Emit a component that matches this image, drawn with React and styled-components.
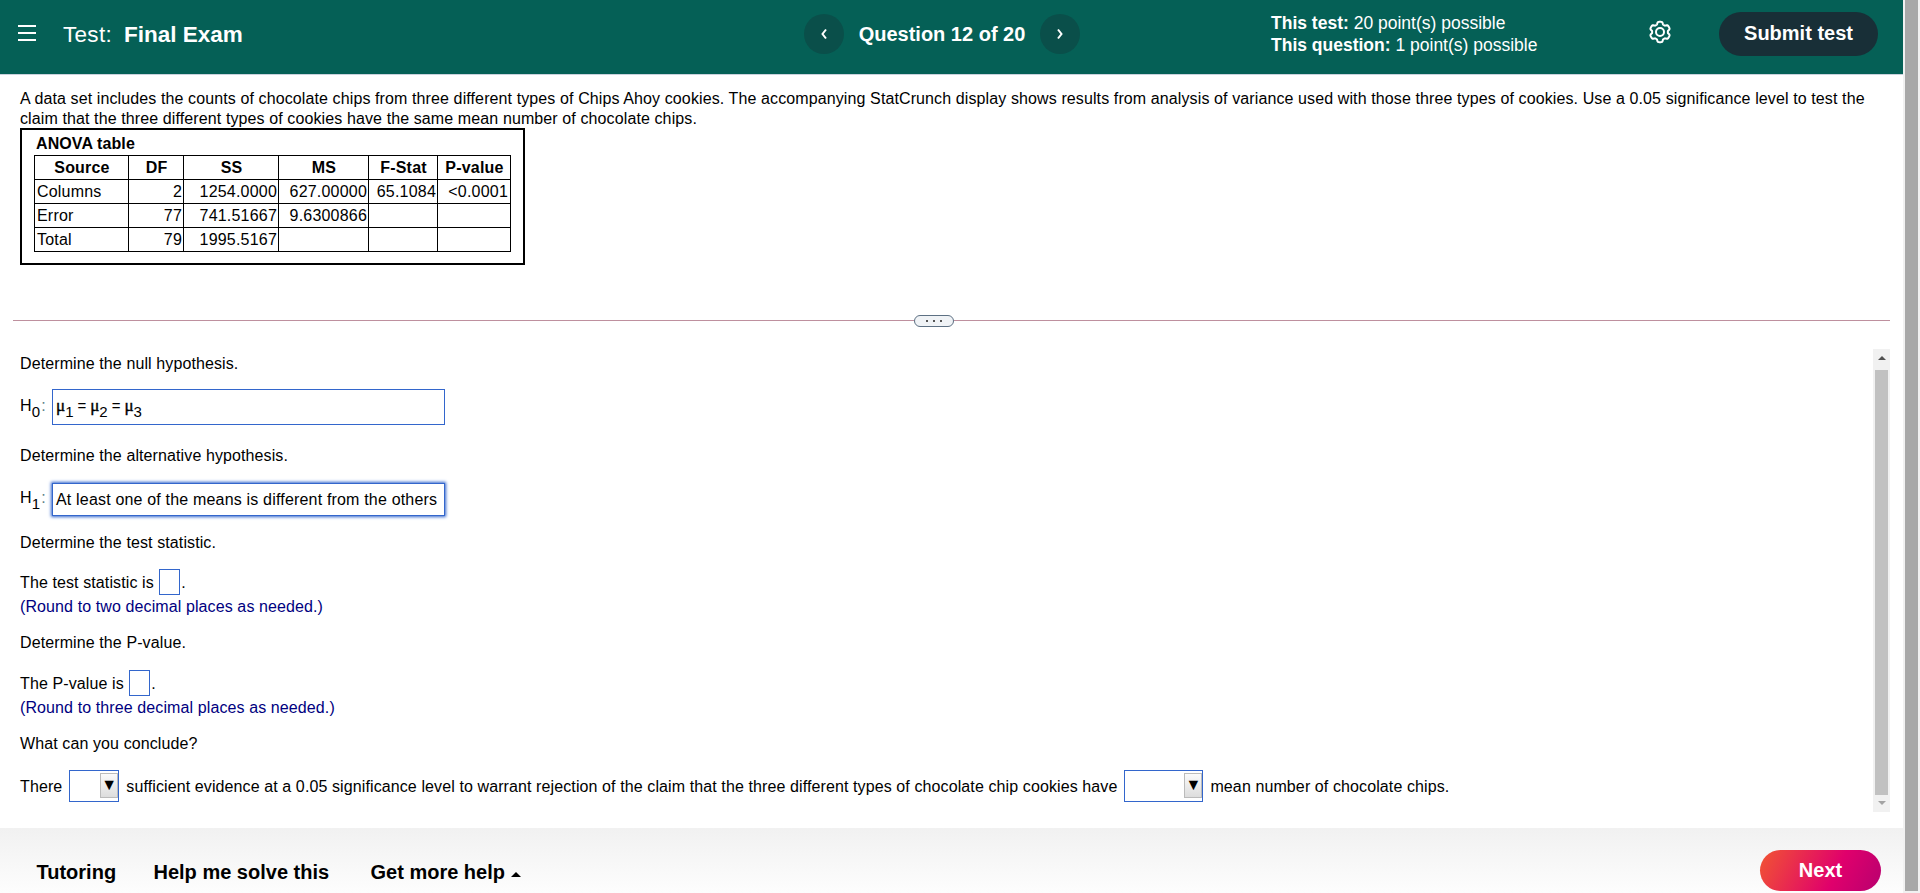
import { useState } from 'react';
import styled, { createGlobalStyle } from 'styled-components';

const columns = ['Source', 'DF', 'SS', 'MS', 'F-Stat', 'P-value'];

const anova = [
    ['Columns', '2', '1254.0000', '627.00000', '65.1084', '<0.0001'],
    ['Error', '77', '741.51667', '9.6300866', '', ''],
    ['Total', '79', '1995.5167', '', '', ''],
];

// six rounded teeth, one of them pointing straight up
const gearPoints = Array.from({ length: 120 }, (_, i) => {
    const angle = (i * 3 * Math.PI) / 180;
    const wave = Math.cos(6 * angle);
    const radius = 9 + 1.2 * Math.tanh(2.5 * (wave + 0.25));
    return `${(12 + radius * Math.sin(angle)).toFixed(2)},${(12 - radius * Math.cos(angle)).toFixed(2)}`;
}).join(' ');

export default function App() {
    const [focused, setFocused] = useState('h1');

    return (
        <>
            <GlobalStyle />
            <Screen>
                <Page>
                    <Header>
                        <MenuIcon viewBox="0 0 18 17"><path d="M0 1h18M0 8h18M0 15h18" /></MenuIcon>
                        <TestTitle><span>Test:</span><b>Final Exam</b></TestTitle>
                        <QuestionNav>
                            <RoundButton aria-label="Previous">
                                <svg width="8" height="12" viewBox="0 0 8 12"><path d="M6 1.5 2.5 6 6 10.5" /></svg>
                            </RoundButton>
                            <QuestionLabel>Question 12 of 20</QuestionLabel>
                            <RoundButton aria-label="Next question">
                                <svg width="8" height="12" viewBox="0 0 8 12"><path d="M2 1.5 5.5 6 2 10.5" /></svg>
                            </RoundButton>
                        </QuestionNav>
                        <Points>
                            <Point><b>This test:</b> 20 point(s) possible</Point>
                            <Point><b>This question:</b> 1 point(s) possible</Point>
                        </Points>
                        <Gear viewBox="0 0 24 24">
                            <polygon points={gearPoints} />
                            <circle cx="12" cy="12" r="4" />
                        </Gear>
                        <SubmitButton>Submit test</SubmitButton>
                    </Header>

                    <Question>
                        <Intro>
                            A data set includes the counts of chocolate chips from three different types of Chips Ahoy cookies. The accompanying StatCrunch display shows results from analysis of variance used with those three types of cookies. Use a 0.05 significance level to test the
                            <br />
                            claim that the three different types of cookies have the same mean number of chocolate chips.
                        </Intro>
                        <TableBox>
                            <Caption>ANOVA table</Caption>
                            <Table>
                                <colgroup>
                                    <col width="94" /><col width="55" /><col width="95" />
                                    <col width="90" /><col width="69" /><col width="73" />
                                </colgroup>
                                <thead>
                                    <tr>{columns.map((name) => <th key={name}>{name}</th>)}</tr>
                                </thead>
                                <tbody>
                                    {anova.map((row) => (
                                        <tr key={row[0]}>
                                            {row.map((cell, index) => <td key={index}>{cell}</td>)}
                                        </tr>
                                    ))}
                                </tbody>
                            </Table>
                        </TableBox>
                    </Question>

                    <Divider>
                        <Line />
                        <Pill><i /><i /><i /></Pill>
                        <Line />
                    </Divider>

                    <Work>
                        <Answers>
                            <Row $h={40} $drop={2}>Determine the null hypothesis.</Row>
                            <Row $h={48}>
                                <Label>H<Sub>0</Sub><Colon>:</Colon></Label>
                                <Answer $h={36} onClick={() => setFocused('h0')} $focused={focused === 'h0'}>
                                    <Mu>μ</Mu><Sub>1</Sub><Eq>=</Eq><Mu>μ</Mu><Sub>2</Sub><Eq>=</Eq><Mu>μ</Mu><Sub>3</Sub>
                                </Answer>
                            </Row>
                            <Row $h={48} $drop={2}>Determine the alternative hypothesis.</Row>
                            <Row $h={40}>
                                <Label>H<Sub>1</Sub><Colon>:</Colon></Label>
                                <Answer $h={33} onClick={() => setFocused('h1')} $focused={focused === 'h1'}>
                                    At least one of the means is different from the others
                                </Answer>
                            </Row>
                            <Row $h={47}>Determine the test statistic.</Row>
                            <Row $h={31} $drop={2}>The test statistic is <Blank />.</Row>
                            <Hint>(Round to two decimal places as needed.)</Hint>
                            <Row $h={52}>Determine the P-value.</Row>
                            <Row $h={29}>The P-value is <Blank />.</Row>
                            <Hint>(Round to three decimal places as needed.)</Hint>
                            <Row $h={52}>What can you conclude?</Row>
                            <Row $h={33}>
                                There <Select $w={50}><Arrow>▼</Arrow></Select>
                                sufficient evidence at a 0.05 significance level to warrant rejection of the claim that the three different types of chocolate chip cookies have
                                <Select $w={79}><Arrow>▼</Arrow></Select>
                                mean number of chocolate chips.
                            </Row>
                        </Answers>
                        <ScrollTrack>
                            <ScrollArrow viewBox="0 0 8 4"><path d="M0 4 4 0l4 4z" fill="#505050" /></ScrollArrow>
                            <ScrollThumb />
                            <ScrollArrow viewBox="0 0 8 4"><path d="M0 0h8L4 4z" fill="#a3a3a3" /></ScrollArrow>
                        </ScrollTrack>
                    </Work>

                    <Footer>
                        <HelpLink $w={117}>Tutoring</HelpLink>
                        <HelpLink $w={217}>Help me solve this</HelpLink>
                        <HelpLink>Get more help <svg width="10" height="5" viewBox="0 0 10 5"><path d="M0 5 5 0l5 5z" /></svg></HelpLink>
                        <NextButton>Next</NextButton>
                    </Footer>
                </Page>
                <PageScroll><div /></PageScroll>
            </Screen>
        </>
    );
}

const GlobalStyle = createGlobalStyle`
    * { box-sizing: border-box; }
    body {
        margin: 0;
        overflow: hidden;
        background: #fff;
        color: #000;
        font: 16px/20px "Liberation Sans", Arial, sans-serif;
    }
    button {
        font-family: inherit;
        border: none;
        padding: 0;
        cursor: pointer;
    }
`;

const Screen = styled.div`
    display: flex;
    width: 1920px;
    height: 893px;
`;

const Page = styled.main`
    width: 1903px;
    display: flex;
    flex-direction: column;
`;

const Header = styled.header`
    height: 75px;
    display: flex;
    align-items: flex-start;
    background: #056056;
    border-bottom: 1px solid #c9d1dc;
    color: #fff;
    white-space: nowrap;
`;

const MenuIcon = styled.svg`
    width: 18px;
    height: 17px;
    margin: 25px 27px 0 18px;
    flex: none;
    path { stroke: #fff; stroke-width: 2; }
`;

const TestTitle = styled.div`
    width: 741px;
    padding-top: 23px;
    display: flex;
    gap: 12px;
    font-size: 22.5px;
    line-height: 24px;
    span { letter-spacing: 0.3px; }
`;

const QuestionNav = styled.nav`
    width: 467px;
    padding-top: 14px;
    display: flex;
    align-items: center;
`;

const RoundButton = styled.button`
    width: 40px;
    height: 40px;
    border-radius: 50%;
    background: #0a4f4a;
    display: flex;
    align-items: center;
    justify-content: center;
    path { fill: none; stroke: #fff; stroke-width: 2; }
`;

const QuestionLabel = styled.div`
    width: 196px;
    text-align: center;
    font-size: 20px;
    font-weight: 700;
`;

const Points = styled.div`
    width: 377px;
    padding-top: 12px;
`;

const Point = styled.div`
    font-size: 17.5px;
    line-height: 22px;
`;

const Gear = styled.svg`
    width: 24px;
    height: 24px;
    margin: 20px 47px 0 0;
    fill: none;
    stroke: #fff;
    stroke-width: 2;
    stroke-linejoin: round;
`;

const SubmitButton = styled.button`
    width: 159px;
    height: 44px;
    margin-top: 12px;
    padding-bottom: 2px;
    border-radius: 22px;
    background: #182f37;
    color: #fff;
    font-size: 20px;
    font-weight: 700;
`;

const Question = styled.section`
    height: 240px;
    padding: 13px 0 0 20px;
`;

const Intro = styled.div`
    height: 40px;
    padding-top: 1px;
    white-space: nowrap;
    letter-spacing: 0.11px;
`;

const TableBox = styled.div`
    width: 505px;
    height: 137px;
    border: 2px solid #000;
    padding: 4px 0 0 12px;
`;

const Caption = styled.div`
    height: 21px;
    padding-left: 2px;
    font-weight: 700;
    letter-spacing: 0.1px;
`;

const Table = styled.table`
    width: 477px;
    table-layout: fixed;
    border-collapse: collapse;
    letter-spacing: 0.2px;
    th, td {
        height: 24px;
        padding: 0 1px 0 2px;
        border: 1px solid #000;
        line-height: 20px;
        text-align: right;
    }
    th { text-align: center; }
    td:first-child { text-align: left; }
    td:last-child { padding-right: 2px; }
`;

const Divider = styled.div`
    height: 12px;
    margin: 0 13px;
    display: flex;
    align-items: flex-start;
`;

const Line = styled.div`
    flex: 1;
    height: 1px;
    margin-top: 5px;
    background: #be909e;
    &:first-child { flex: 0 0 901px; }
`;

const Pill = styled.div`
    width: 40px;
    height: 12px;
    border: 1px solid #5d7083;
    border-radius: 6px;
    background: #f0f3f6;
    display: flex;
    align-items: center;
    justify-content: center;
    gap: 5px;
    i { width: 2px; height: 2px; background: #555; }
`;

const Work = styled.section`
    height: 501px;
    padding: 16px 13px 0 20px;
    display: flex;
    justify-content: space-between;
`;

const Answers = styled.div`
    white-space: nowrap;
    letter-spacing: 0.105px;
`;

const Row = styled.div`
    height: ${({ $h }) => $h}px;
    padding-top: ${({ $drop }) => $drop || 0}px;
    display: flex;
    align-items: center;
`;

const Label = styled.div`
    width: 32px;
    flex: none;
    margin-top: -2px;
`;

const Sub = styled.span`
    position: relative;
    top: 6px;
    font-size: 15px;
`;

const Colon = styled.span`
    margin-left: 1px;
    color: #5f8288;
`;

const Mu = styled.span`
    font-family: "Liberation Serif", serif;
    font-size: 17px;
    -webkit-text-stroke: 0.4px #000;
`;

const Eq = styled.span`
    margin: 0 4px;
    font-size: 15px;
`;

const Answer = styled.div`
    width: 393px;
    height: ${({ $h }) => $h}px;
    padding: 0 0 2px 3px;
    display: flex;
    align-items: center;
    border: 1px solid #3366cc;
    box-shadow: ${({ $focused }) => ($focused ? '0 0 3px 1px #3366cc' : 'none')};
    letter-spacing: ${({ $focused }) => ($focused ? '0.18px' : '0')};
    ${({ $focused }) => $focused && 'padding-bottom: 0; padding-top: 1px;'}
`;

const Blank = styled.span`
    width: 21px;
    height: 26px;
    margin: -2px 1px 0 5.5px;
    border: 1px solid #3366cc;
`;

const Hint = styled.div`
    height: 20px;
    color: #000080;
`;

const Select = styled.span`
    width: ${({ $w }) => $w}px;
    height: 32px;
    margin: -2px 7px 0;
    flex: none;
    display: flex;
    align-items: center;
    justify-content: flex-end;
    border: 1px solid #3366cc;
`;

const Arrow = styled.span`
    width: 18px;
    height: 25px;
    border: 1px solid #bbb;
    background: linear-gradient(#fafafa, #ddd);
    text-align: center;
    line-height: 21px;
`;

const ScrollTrack = styled.div`
    width: 17px;
    height: 463px;
    margin-top: 6px;
    padding: 7px 0;
    background: #f1f1f1;
    display: flex;
    flex-direction: column;
    align-items: center;
    justify-content: space-between;
`;

const ScrollArrow = styled.svg`
    width: 8px;
    height: 4px;
`;

const ScrollThumb = styled.div`
    width: 13px;
    height: 425px;
    margin-top: 4px;
    background: #c1c1c1;
`;

const Footer = styled.footer`
    height: 65px;
    padding: 0 22px 0 36.5px;
    display: flex;
    align-items: flex-start;
    background: linear-gradient(#f1f1f1, #fdfdfd);
`;

const HelpLink = styled.div`
    width: ${({ $w }) => ($w ? `${$w}px` : 'auto')};
    padding-top: 34px;
    font-size: 20px;
    font-weight: 700;
    white-space: nowrap;
    svg { vertical-align: 2px; }
`;

const NextButton = styled.button`
    width: 121px;
    height: 41px;
    margin: 22px 0 0 auto;
    border-radius: 21px;
    background: linear-gradient(116deg, #f04e37 5%, #e0006c 62%, #b8006f);
    color: #fff;
    font-size: 20px;
    font-weight: 700;
`;

const PageScroll = styled.div`
    width: 17px;
    padding: 0 2px;
    background: #f1f1f1;
    div { height: 891px; background: #a8a8a8; }
`;
